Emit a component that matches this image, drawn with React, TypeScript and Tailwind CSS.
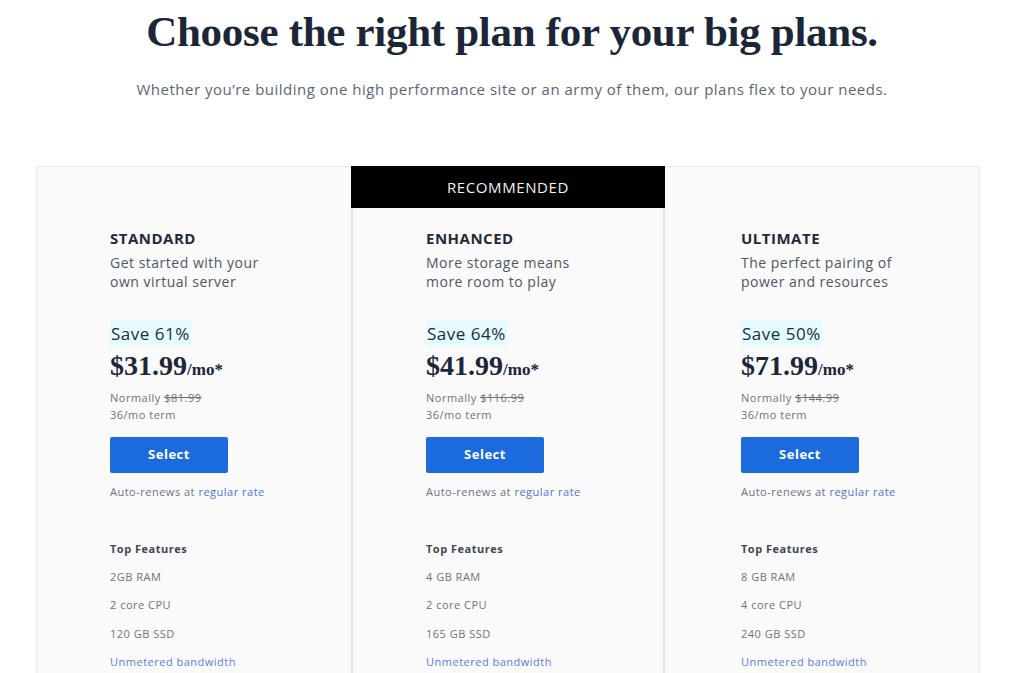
const PLANS = [
  {
    name: 'STANDARD',
    desc: ['Get started with your', 'own virtual server'],
    save: 'Save 61%',
    price: '$31.99',
    normal: '$81.99',
    features: ['2GB RAM', '2 core CPU', '120 GB SSD'],
    pad: 'pl-[73px]',
  },
  {
    name: 'ENHANCED',
    desc: ['More storage means', 'more room to play'],
    save: 'Save 64%',
    price: '$41.99',
    normal: '$116.99',
    features: ['4 GB RAM', '2 core CPU', '165 GB SSD'],
    recommended: true,
    pad: 'pl-[73px]',
  },
  {
    name: 'ULTIMATE',
    desc: ['The perfect pairing of', 'power and resources'],
    save: 'Save 50%',
    price: '$71.99',
    normal: '$144.99',
    features: ['8 GB RAM', '4 core CPU', '240 GB SSD'],
    pad: 'pl-[76px]',
  },
];

const sans = "font-['Open_Sans',sans-serif]";
const serif = "font-['Liberation_Serif',serif]";

export default function App() {
  return (
    <div className={`h-[673px] w-[1024px] overflow-hidden bg-white ${sans}`}>
      <h1 className={`pt-[8px] text-center text-[43px] font-bold leading-[48px] tracking-[-0.3px] text-[#1b2638] ${serif}`}>
        Choose the right plan for your big plans.
      </h1>
      <p className="mt-[23px] text-center text-[15px] leading-[20px] tracking-[0.5px] text-[#5b6675]">
        Whether you’re building one high performance site or an army of them, our plans flex to your needs.
      </p>

      <div className="ml-[36px] mt-[67px] grid w-[944px] grid-cols-3 border border-[#ececec] bg-[#fafafa] tracking-[0.5px]">
        {PLANS.map((p) => (
          <div
            key={p.name}
            className={p.recommended ? 'border-x-2 border-[#e6e6e6]' : ''}
          >
            {p.recommended ? (
              <div className="-mx-[2px] -mt-px flex h-[42px] items-center justify-center bg-black text-[15px] tracking-[0.6px] text-[#f2f2f2]">
                RECOMMENDED
              </div>
            ) : (
              <div className="h-[41px]" />
            )}
            <div className={`pb-10 pt-[20px] ${p.pad}`}>
              <h2 className="text-[15px] font-bold leading-[20px] text-[#1f2a3a]">{p.name}</h2>
              <p className="mt-[5px] text-[14px] leading-[19px] text-[#4d5766]">
                {p.desc[0]}
                <br />
                {p.desc[1]}
              </p>
              <div className="mt-[31px]">
                <span className="bg-[#e4fbff] px-[1px] py-[1px] text-[17px] leading-[22px] text-[#1f2a3a]">
                  {p.save}
                </span>
              </div>
              <div className={`mt-[4px] flex items-baseline tracking-normal text-[#1b2638] ${serif}`}>
                <span className="text-[28px] font-bold leading-[32px]">{p.price}</span>
                <span className="text-[17px] font-bold">/mo*</span>
              </div>
              <p className="mt-[6px] text-[11px] leading-[17px] text-[#6b7380]">
                Normally <span className="line-through">{p.normal}</span>
                <br />
                36/mo term
              </p>
              <button className="mt-[14px] flex h-[36px] w-[118px] items-center justify-center rounded-[2px] bg-[#1b6bdf] text-[13px] font-bold text-white">
                Select
              </button>
              <p className="mt-[11px] text-[11px] leading-[16px] text-[#6b7380]">
                Auto-renews at <span className="text-[#4d73d9]">regular rate</span>
              </p>
              <p className="mt-[41px] text-[11px] font-bold leading-[16px] text-[#3d4656]">Top Features</p>
              <ul className="mt-[12px] flex flex-col gap-[12.5px] text-[11px] leading-[16px] text-[#6b7380]">
                {p.features.map((f) => (
                  <li key={f}>{f}</li>
                ))}
                <li className="text-[#5a7be0]">Unmetered bandwidth</li>
              </ul>
            </div>
          </div>
        ))}
      </div>
    </div>
  );
}
